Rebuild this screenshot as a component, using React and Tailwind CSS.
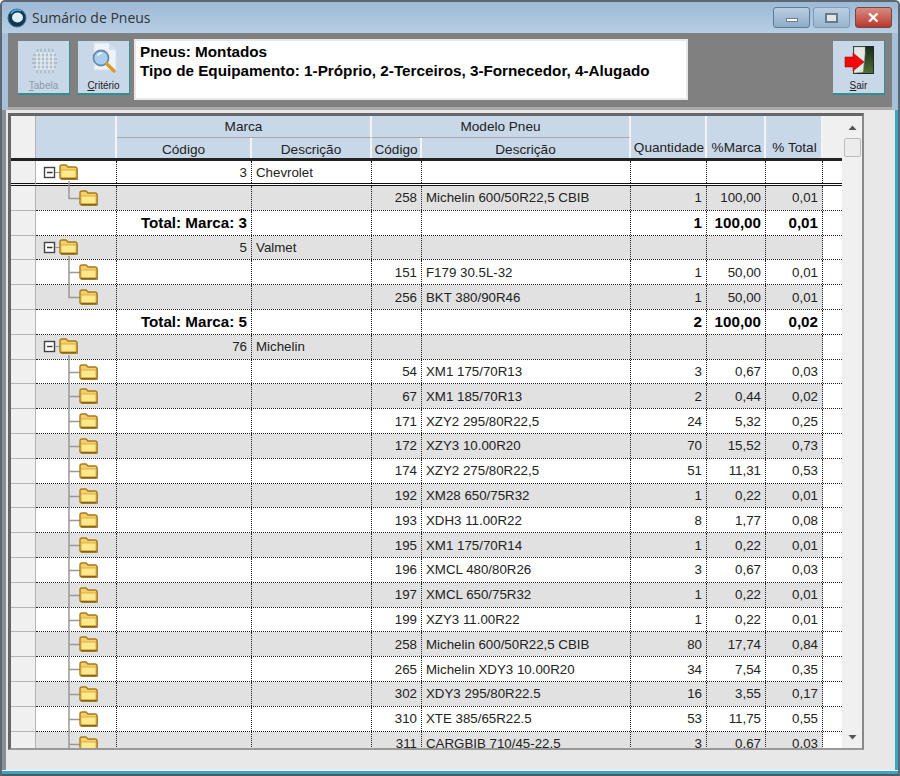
import React from 'react';

const cols = {
  ind: 'w-[25px]',
  tree: 'w-[81px]',
  cod: 'w-[135px]',
  desc: 'w-[120px]',
  cod2: 'w-[50px]',
  desc2: 'w-[209px]',
  qtd: 'w-[76px]',
  pm: 'w-[59px]',
  pt: 'w-[57px]',
};

// kind: g = marca group, i = item, t = total
const rows = [
  { kind: 'g', cod: '3', desc: 'Chevrolet' },
  { kind: 'i', last: true, cod2: '258', desc2: 'Michelin 600/50R22,5 CBIB', qtd: '1', pm: '100,00', pt: '0,01' },
  { kind: 't', label: 'Total: Marca: 3', qtd: '1', pm: '100,00', pt: '0,01' },
  { kind: 'g', cod: '5', desc: 'Valmet' },
  { kind: 'i', cod2: '151', desc2: 'F179 30.5L-32', qtd: '1', pm: '50,00', pt: '0,01' },
  { kind: 'i', last: true, cod2: '256', desc2: 'BKT 380/90R46', qtd: '1', pm: '50,00', pt: '0,01' },
  { kind: 't', label: 'Total: Marca: 5', qtd: '2', pm: '100,00', pt: '0,02' },
  { kind: 'g', cod: '76', desc: 'Michelin' },
  { kind: 'i', cod2: '54', desc2: 'XM1 175/70R13', qtd: '3', pm: '0,67', pt: '0,03' },
  { kind: 'i', cod2: '67', desc2: 'XM1 185/70R13', qtd: '2', pm: '0,44', pt: '0,02' },
  { kind: 'i', cod2: '171', desc2: 'XZY2 295/80R22,5', qtd: '24', pm: '5,32', pt: '0,25' },
  { kind: 'i', cod2: '172', desc2: 'XZY3 10.00R20', qtd: '70', pm: '15,52', pt: '0,73' },
  { kind: 'i', cod2: '174', desc2: 'XZY2 275/80R22,5', qtd: '51', pm: '11,31', pt: '0,53' },
  { kind: 'i', cod2: '192', desc2: 'XM28 650/75R32', qtd: '1', pm: '0,22', pt: '0,01' },
  { kind: 'i', cod2: '193', desc2: 'XDH3 11.00R22', qtd: '8', pm: '1,77', pt: '0,08' },
  { kind: 'i', cod2: '195', desc2: 'XM1 175/70R14', qtd: '1', pm: '0,22', pt: '0,01' },
  { kind: 'i', cod2: '196', desc2: 'XMCL 480/80R26', qtd: '3', pm: '0,67', pt: '0,03' },
  { kind: 'i', cod2: '197', desc2: 'XMCL 650/75R32', qtd: '1', pm: '0,22', pt: '0,01' },
  { kind: 'i', cod2: '199', desc2: 'XZY3 11.00R22', qtd: '1', pm: '0,22', pt: '0,01' },
  { kind: 'i', cod2: '258', desc2: 'Michelin 600/50R22,5 CBIB', qtd: '80', pm: '17,74', pt: '0,84' },
  { kind: 'i', cod2: '265', desc2: 'Michelin XDY3 10.00R20', qtd: '34', pm: '7,54', pt: '0,35' },
  { kind: 'i', cod2: '302', desc2: 'XDY3 295/80R22.5', qtd: '16', pm: '3,55', pt: '0,17' },
  { kind: 'i', cod2: '310', desc2: 'XTE 385/65R22.5', qtd: '53', pm: '11,75', pt: '0,55' },
  { kind: 'i', cod2: '311', desc2: 'CARGBIB 710/45-22.5', qtd: '3', pm: '0,67', pt: '0,03' },
];

const Folder = ({ x, y }) => (
  <g transform={`translate(${x} ${y})`}>
    <path d="M2.5 17 H19 V6 H18 V15 H2.5 Z" fill="#9b9b8c" />
    <path d="M1 4 Q1 2 3 2 H7 L9 4 H16 Q18 4 18 6 V14 Q18 16 16 16 H3 Q1 16 1 14 Z" fill="#f4cf6b" stroke="#a8791a" strokeWidth="1.4" />
    <path d="M2 7 H17 V14 Q17 15 16 15 H3 Q2 15 2 14 Z" fill="#ffe98c" stroke="#d3a437" strokeWidth="0.8" />
    <path d="M2 15.5 H17" stroke="#8c6510" strokeWidth="1.4" />
  </g>
);

const TreeCell = ({ row }) => {
  if (row.kind === 't') return null;
  return (
    <svg width="81" height="25" className="block overflow-visible">
      {row.kind === 'g' ? (
        <>
          <rect x="8.5" y="6.5" width="10" height="10" fill="#fff" stroke="#444" strokeWidth="1.4" />
          <path d="M11 11.5 H16.5" stroke="#333" strokeWidth="1.4" />
          <path d="M19 11.5 H24" stroke="#999" strokeWidth="1" />
          <path d="M33 20 V25" stroke="#999" strokeWidth="1.5" />
          <Folder x={23} y={2} />
        </>
      ) : (
        <>
          <path d={row.last ? 'M33 0 V12.5 H45' : 'M33 0 V25 M33 12.5 H45'} stroke="#999" strokeWidth="1.5" fill="none" />
          <Folder x={43} y={3} />
        </>
      )}
    </svg>
  );
};

const cellBorder = 'border-r border-dotted border-[#222]';

const Row = ({ row, index }) => {
  const gray = index % 2 === 1;
  const first = index === 0;
  const bold = row.kind === 't';
  const txt = bold ? 'font-bold text-[15.2px] leading-[15px] text-black' : 'text-[13.3px] leading-[13px] text-[#222]';
  const bg = gray ? 'bg-[#e1e1e1]' : 'bg-white';
  const lineBottom = first
    ? 'border-b-[3px] border-double border-[#111]'
    : 'border-b border-dotted border-[#222]';
  return (
    <div className={`flex shrink-0 ${first ? 'h-[25px]' : 'h-[24.8px]'}`}>
      <div className={`${cols.ind} shrink-0 bg-[#f0f0f0] border-r border-[#b4b4b4] ${first ? 'border-b-[3px] border-b-[#111] border-double' : 'border-b border-b-[#b4b4b4]'}`} />
      <div className={`flex-1 min-h-0 min-w-0 flex ${lineBottom}`}>
        <div className={`${cols.tree} shrink-0 ${bg} ${cellBorder}`}>
          <TreeCell row={row} />
        </div>
        <div className={`${cols.cod} shrink-0 ${bg} ${cellBorder} flex items-center justify-end pr-1 whitespace-nowrap ${txt}`}>
          {bold ? row.label : row.cod}
        </div>
        <div className={`${cols.desc} shrink-0 ${bg} ${cellBorder} flex items-center pl-1 ${txt}`}>{row.desc}</div>
        <div className={`${cols.cod2} shrink-0 ${bg} ${cellBorder} flex items-center justify-end pr-1 ${txt}`}>{row.cod2}</div>
        <div className={`${cols.desc2} shrink-0 ${bg} ${cellBorder} flex items-center pl-1 whitespace-nowrap ${txt}`}>{row.desc2}</div>
        <div className={`${cols.qtd} shrink-0 ${bg} ${cellBorder} flex items-center justify-end pr-1 ${txt}`}>{row.qtd}</div>
        <div className={`${cols.pm} shrink-0 ${bg} ${cellBorder} flex items-center justify-end pr-1 ${txt}`}>{row.pm}</div>
        <div className={`${cols.pt} shrink-0 ${bg} ${cellBorder} flex items-center justify-end pr-1 ${txt}`}>{row.pt}</div>
        <div className="flex-1 bg-white" />
      </div>
    </div>
  );
};

const headBg = 'bg-[#c8d8e8]';
const headCell = `${headBg} border-r-2 border-[#f4f4f4] flex text-[13.6px] text-[#222]`;

const Header = () => (
  <div className="flex h-[42px] shrink-0">
    <div className={`${cols.ind} shrink-0 bg-[#f0f0f0] border-r border-[#b4b4b4]`} />
    <div className={`${cols.tree} shrink-0 ${headCell}`} />
    <div className="w-[255px] shrink-0 flex flex-col">
      <div className={`h-[22px] pt-[1px] ${headCell} items-center justify-center border-b border-b-[#a8a8a8]`}>Marca</div>
      <div className="flex-1 flex">
        <div className={`${cols.cod} pt-[2px] ${headCell} items-center justify-center`}>Código</div>
        <div className={`${cols.desc} pt-[2px] ${headCell} items-center justify-center`}>Descrição</div>
      </div>
    </div>
    <div className="w-[259px] shrink-0 flex flex-col">
      <div className={`h-[22px] pt-[1px] ${headCell} items-center justify-center border-b border-b-[#a8a8a8]`}>Modelo Pneu</div>
      <div className="flex-1 flex">
        <div className={`${cols.cod2} pt-[2px] ${headCell} items-center justify-center`}>Código</div>
        <div className={`${cols.desc2} pt-[2px] ${headCell} items-center justify-center`}>Descrição</div>
      </div>
    </div>
    <div className={`${cols.qtd} shrink-0 ${headCell} items-end justify-center pl-[2px]`}>Quantidade</div>
    <div className={`${cols.pm} shrink-0 ${headCell} items-end justify-center pl-[2px]`}>%Marca</div>
    <div className={`${cols.pt} shrink-0 ${headCell} items-end justify-center pl-[2px]`}>% Total</div>
    <div className="flex-1 bg-[#f0f0f0]" />
  </div>
);

const TabelaIcon = () => (
  <svg width="28" height="28" viewBox="0 0 28 28" fill="none" stroke="#a9b4be" strokeWidth="1.3">
    <path d="M7 5 L8 2 M11 5 V1.5 M15 5 V1.5 M19 5 V1.5 M23 5 L22 2 M3 8 H26 M2 12 H27 M2 16 H27 M3 20 H26 M7 23 V26 M11 23 V26.5 M15 23 V26.5 M19 23 V26.5 M23 23 V26" />
    <path d="M7 5 V23 M11 5 V23 M15 5 V23 M19 5 V23 M23 5 V23" stroke="#e6ecf1" strokeWidth="1.5" />
  </svg>
);

const CriterioIcon = () => (
  <svg width="34" height="34" viewBox="0 0 34 34">
    <path d="M7 2 H22 L29 9 V29 H7 Z" fill="#eef3f8" stroke="#d4dfea" />
    <path d="M22 2 V9 H29" fill="#d3dfea" />
    <circle cx="14" cy="17" r="7.5" fill="#a8d0ee" stroke="#6c89a8" strokeWidth="1.8" />
    <path d="M10.5 14.5 A5 5 0 0 1 15 12" stroke="#fff" strokeWidth="1.5" fill="none" />
    <path d="M20 23 L27 30" stroke="#d99a2c" strokeWidth="3.4" strokeLinecap="round" />
  </svg>
);

const SairIcon = () => (
  <svg width="30" height="30" viewBox="0 0 30 30">
    <defs>
      <linearGradient id="doorDark" x1="0" y1="0" x2="0" y2="1">
        <stop offset="0" stopColor="#1c2a20" />
        <stop offset="1" stopColor="#4f7035" />
      </linearGradient>
    </defs>
    <rect x="9.5" y="1.5" width="20" height="27" fill="url(#doorDark)" stroke="#1e2a1e" />
    <path d="M10 2 H21 V9 L19 27 L10 28 Z" fill="#e4e8e4" stroke="#a4aca4" strokeWidth="0.5" />
    <path d="M1 12 H9 V8 L20 17 L9 26 V22 H1 Z" fill="#ee0a0a" stroke="#b80000" strokeWidth="0.6" />
  </svg>
);

const ToolButton = ({ icon, letter, rest, muted }) => (
  <div className={`w-[52px] h-[54px] ${headBg} border-r border-b-2 border-[#2f8f94] flex flex-col items-center`}>
    <div className="h-[34px] flex items-end justify-center">{icon}</div>
    <div className={`mt-[5px] text-[10px] leading-[12px] ${muted ? 'text-[#8d9aa6]' : 'text-[#222]'}`}>
      <span className="underline">{letter}</span>{rest}
    </div>
  </div>
);

const ScrollBar = () => (
  <div className="w-[20px] shrink-0 bg-[#f0f0f0] flex flex-col items-center">
    <div className="h-[22px] flex items-center justify-center text-[#444]">
      <svg width="9" height="5"><path d="M0.5 5 L4.5 0.5 L8.5 5 Z" fill="#555" /></svg>
    </div>
    <div className="w-[17px] h-[19px] bg-[#ececec] border border-[#bdbdbd] rounded-[2px]" />
    <div className="flex-1" />
    <div className="h-[22px] flex items-center justify-center">
      <svg width="9" height="5"><path d="M0.5 0 L8.5 0 L4.5 4.5 Z" fill="#555" /></svg>
    </div>
  </div>
);

export default function App() {
  return (
    <div className="w-[900px] h-[776px] overflow-hidden bg-[#a6c0d9] border-2 border-b-0 border-[#5d6770] rounded-t-[5px] flex flex-col" style={{ fontFamily: '"Liberation Sans", Arial, sans-serif' }}>
      {/* title bar */}
      <div className="h-[31px] shrink-0 flex items-center bg-gradient-to-b from-[#9db9d5] to-[#b7cfe4] pl-[5px] pr-[6px]">
        <svg width="20" height="20" viewBox="0 0 20 20">
          <circle cx="10" cy="10" r="9" fill="#16364f" />
          <circle cx="10" cy="10" r="9" fill="none" stroke="#2f6f9a" strokeWidth="1" />
          <ellipse cx="10.5" cy="9.5" rx="5.5" ry="5" fill="#dcefff" />
          <path d="M4 6 A7 7 0 0 1 14 3" stroke="#4fb0e0" strokeWidth="1.5" fill="none" />
        </svg>
        <span className="ml-[5px] text-[14px] text-[#333]" style={{ fontFamily: '"Open Sans", sans-serif' }}>Sumário de Pneus</span>
        <div className="ml-auto flex gap-[3px]">
          <div className="w-[37px] h-[21px] rounded-[3px] border border-[#5f7a92] bg-gradient-to-b from-[#b9cfe3] to-[#8fabc6] flex items-center justify-center">
            <div className="w-[12px] h-[4px] mt-[5px] bg-white border border-[#6b7f90]" />
          </div>
          <div className="w-[37px] h-[21px] rounded-[3px] border border-[#7f9ab2] bg-gradient-to-b from-[#b9cfe3] to-[#9ab5ce] flex items-center justify-center">
            <div className="w-[13px] h-[10px] bg-[#dfe6ec] border-2 border-[#69798a]" />
          </div>
          <div className="ml-[2px] w-[37px] h-[21px] rounded-[3px] border border-[#6d4a4a] bg-gradient-to-b from-[#d98a80] to-[#b8352a] flex items-center justify-center text-white font-bold text-[15px] leading-none">
            ✕
          </div>
        </div>
      </div>

      {/* toolbar */}
      <div className="mx-[6px] h-[77px] shrink-0 bg-[#808080] border-b-[3px] border-[#a9a9a9] flex items-start pl-[10px] pr-[7px] pt-[8px]">
        <ToolButton icon={<TabelaIcon />} letter="T" rest="abela" muted />
        <div className="ml-[8px]">
          <ToolButton icon={<CriterioIcon />} letter="C" rest="ritério" />
        </div>
        <div className="ml-[4px] -mt-[2px] w-[554px] h-[61px] bg-white border-2 border-[#e8e8e8] pl-[4px] pt-[1px] text-[15.25px] leading-[19px] font-bold text-black whitespace-nowrap">
          <div>Pneus: Montados</div>
          <div>Tipo de Equipamento: 1-Próprio, 2-Terceiros, 3-Fornecedor, 4-Alugado</div>
        </div>
        <div className="ml-auto">
          <ToolButton icon={<SairIcon />} letter="S" rest="air" />
        </div>
      </div>

      {/* grid panel + light area */}
      <div className="flex-1 min-h-0 flex flex-col bg-[#e8e8e8] border-l-[4px] border-l-[#8a8f93] border-r-[3px] border-r-[#35a6c4]">
        <div className="h-[640px] shrink-0 flex">
          <div className="w-[856px] shrink-0 ml-[2px] mt-[3px] border-l-[3px] border-t-[3px] border-r-2 border-b-2 border-l-[#666] border-t-[#666] border-r-[#888] border-b-[#999] bg-white flex overflow-hidden">
            <div className="flex-1 min-w-0 flex flex-col overflow-hidden">
              <Header />
              <div className="h-[3px] shrink-0 bg-[#222]" />
              {rows.map((row, i) => <Row key={i} row={row} index={i} />)}
            </div>
            <ScrollBar />
          </div>
        </div>
        <div className="flex-1" />
      </div>

      {/* bottom edge */}
      <div className="h-[1px] shrink-0 bg-white" />
      <div className="h-[3px] shrink-0 bg-[#35a6c4]" />
      <div className="h-[2px] shrink-0 bg-[#4d5a63]" />
    </div>
  );
}
